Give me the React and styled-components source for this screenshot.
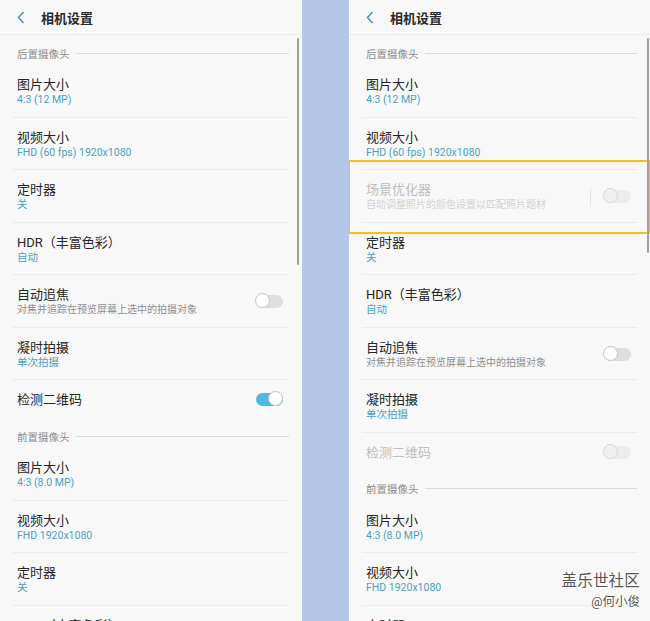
import React from 'react';
import styled, { createGlobalStyle } from 'styled-components';

const fontStack = 'Roboto, "Noto Sans CJK SC", "Noto Sans", sans-serif';
const textColor = '#252525';
const valueColor = '#4b9fc6';

const GlobalStyle = createGlobalStyle`
  html, body {
    margin: 0;
    padding: 0;
    background: #f8f8f8;
  }
  body {
    font-family: ${fontStack};
  }
`;

const Page = styled.div`
  position: relative;
  display: flex;
  width: 650px;
  height: 621px;
  overflow: hidden;
`;

const Panel = styled.div`
  position: relative;
  width: ${(p) => p.width}px;
  flex-shrink: 0;
  background: #f8f8f8;
  overflow: hidden;
`;

const Band = styled.div`
  width: 47px;
  flex-shrink: 0;
  background: #b4c7e6;
`;

const Header = styled.div`
  display: flex;
  align-items: center;
  height: 34px;
  border-bottom: 1px solid #ebebeb;
  padding-left: 17px;
`;

const Back = styled.svg`
  width: 8px;
  height: 13px;
  margin-right: 16px;
`;

const HeaderTitle = styled.div`
  font-size: 13px;
  font-weight: 700;
  color: #2a2a2a;
`;

const Scrollbar = styled.div`
  position: absolute;
  top: 38px;
  right: ${(p) => p.right}px;
  width: 2.5px;
  height: ${(p) => p.length}px;
  background: #a0a0a0;
  border-radius: 2px;
`;

const List = styled.div`
  padding: 0 13px;
`;

const Section = styled.div`
  display: flex;
  align-items: center;
  gap: 6px;
  height: 30px;
  padding: 6px 0 0 4px;
  box-sizing: border-box;
`;

const SectionLabel = styled.span`
  font-size: 10.5px;
  color: #8c8c8c;
  white-space: nowrap;
`;

const SectionLine = styled.div`
  flex: 1;
  height: 1px;
  background: #dcdcdc;
`;

const Row = styled.div`
  position: relative;
  display: flex;
  align-items: center;
  box-sizing: border-box;
  height: ${(p) => (p.single ? 38 : 52.5)}px;
  padding: ${(p) => (p.single ? '1px 6px 0 4px' : '2px 6px 0 4px')};
  border-bottom: ${(p) => (p.last ? 'none' : '1px solid #ebebeb')};

  ${(p) =>
    p.highlight &&
    `
    &::after {
      content: '';
      position: absolute;
      left: -14px;
      right: -13px;
      top: -10px;
      bottom: -12px;
      border: 2px solid #f3bf22;
      pointer-events: none;
    }
  `}
`;

const TextCol = styled.div`
  flex: 1;
  display: flex;
  flex-direction: column;
  justify-content: center;
`;

const Title = styled.div`
  font-size: 13px;
  line-height: 17px;
  color: ${(p) => (p.disabled ? '#bdbdbd' : textColor)};
`;

const Value = styled.div`
  font-size: 10.5px;
  line-height: 14px;
  color: ${valueColor};
`;

const Desc = styled.div`
  font-size: 10px;
  line-height: 14px;
  color: ${(p) => (p.disabled ? '#d2d2d2' : '#8e8e8e')};
`;

const Divider = styled.div`
  width: 1px;
  height: 17px;
  background: #e4e4e4;
  margin-right: 13px;
`;

const Track = styled.div`
  position: relative;
  width: 27px;
  height: 13px;
  border-radius: 7px;
  background: ${(p) => (p.on ? '#4cb8e3' : p.disabled ? '#ececec' : '#dedede')};
`;

const Knob = styled.div`
  position: absolute;
  top: -2px;
  left: ${(p) => (p.on ? 12 : -1)}px;
  width: 15px;
  height: 15px;
  box-sizing: border-box;
  border-radius: 50%;
  background: ${(p) => (p.disabled ? '#f0f0f0' : '#ffffff')};
  border: 1px solid ${(p) => (p.disabled ? '#d6d6d6' : '#c4c4c4')};
`;

const Watermark = styled.div`
  position: absolute;
  right: 10px;
  bottom: 10px;
  display: flex;
  flex-direction: column;
  align-items: flex-end;
  color: #555;
  text-shadow: 0 0 2px #fff, 0 0 2px #fff, 0 0 3px #fff;
`;

const MarkBig = styled.div`
  font-size: 15.5px;
  line-height: 20px;
  letter-spacing: 0.2px;
`;

const MarkSmall = styled.div`
  font-size: 12.5px;
  line-height: 18px;
  margin-top: 2px;
`;

const Toggle = ({ on, disabled }) => (
  <Track on={on} disabled={disabled}>
    <Knob on={on} disabled={disabled} />
  </Track>
);

const rear = [
  { title: '图片大小', value: '4:3 (12 MP)' },
  { title: '视频大小', value: 'FHD (60 fps) 1920x1080' },
];

const rearRest = [
  { title: '定时器', value: '关' },
  { title: 'HDR（丰富色彩）', value: '自动' },
  { title: '自动追焦', desc: '对焦并追踪在预览屏幕上选中的拍摄对象', toggle: 'off' },
  { title: '凝时拍摄', value: '单次拍摄' },
];

const front = [
  { title: '图片大小', value: '4:3 (8.0 MP)' },
  { title: '视频大小', value: 'FHD 1920x1080' },
  { title: '定时器', value: '关' },
  { title: 'HDR（丰富色彩）', value: '自动' },
];

const scene = {
  title: '场景优化器',
  desc: '自动调整照片的颜色设置以匹配照片题材',
  toggle: 'off',
  disabled: true,
  separator: true,
  highlight: true,
};

const Item = ({ item, last }) => {
  const single = !item.value && !item.desc;
  return (
    <Row single={single} last={last} highlight={item.highlight}>
      <TextCol>
        <Title disabled={item.disabled}>{item.title}</Title>
        {item.value && <Value>{item.value}</Value>}
        {item.desc && <Desc disabled={item.disabled}>{item.desc}</Desc>}
      </TextCol>
      {item.separator && <Divider />}
      {item.toggle && <Toggle on={item.toggle === 'on'} disabled={item.disabled} />}
    </Row>
  );
};

const Screen = ({ width, withScene, scrollRight, scrollLength }) => {
  const rearItems = [
    ...rear,
    ...(withScene ? [scene] : []),
    ...rearRest,
    withScene
      ? { title: '检测二维码', toggle: 'off', disabled: true }
      : { title: '检测二维码', toggle: 'on' },
  ];
  return (
    <Panel width={width}>
      <Header>
        <Back viewBox="0 0 8 13">
          <polyline points="6.5,1 1.5,6.5 6.5,12" fill="none" stroke="#4a8fa9" strokeWidth="1.4" />
        </Back>
        <HeaderTitle>相机设置</HeaderTitle>
      </Header>
      <List>
        <Section>
          <SectionLabel>后置摄像头</SectionLabel>
          <SectionLine />
        </Section>
        {rearItems.map((item, i) => (
          <Item key={i} item={item} last={i === rearItems.length - 1} />
        ))}
        <Section>
          <SectionLabel>前置摄像头</SectionLabel>
          <SectionLine />
        </Section>
        {front.map((item, i) => (
          <Item key={i} item={item} />
        ))}
      </List>
      <Scrollbar right={scrollRight} length={scrollLength} />
    </Panel>
  );
};

export default function App() {
  return (
    <>
      <GlobalStyle />
      <Page>
        <Screen width={302} scrollRight={3} scrollLength={227} />
        <Band />
        <Screen width={301} withScene scrollRight={1} scrollLength={215} />
        <Watermark>
          <MarkBig>盖乐世社区</MarkBig>
          <MarkSmall>@何小俊</MarkSmall>
        </Watermark>
      </Page>
    </>
  );
}
